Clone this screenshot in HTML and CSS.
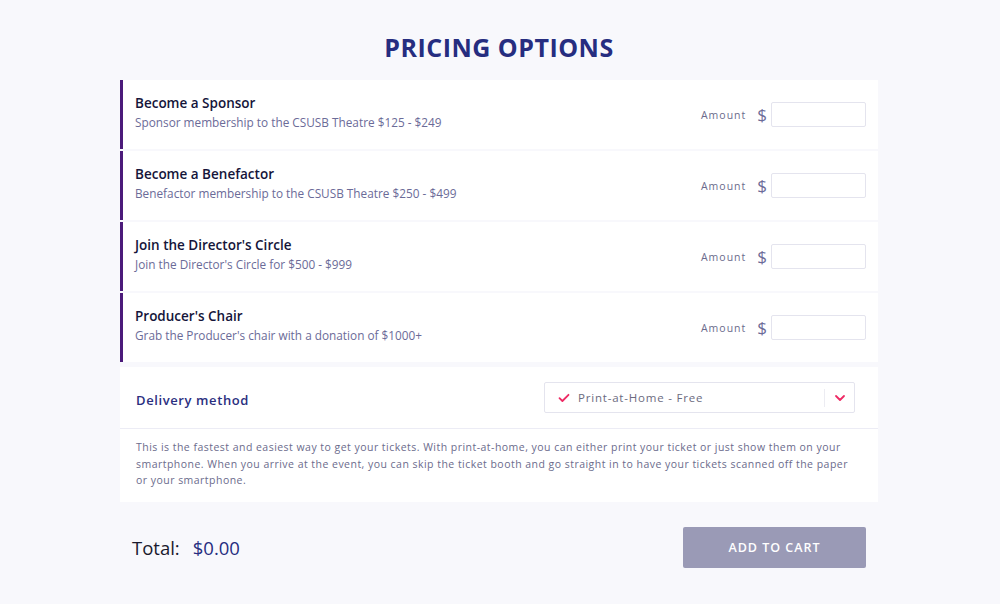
FILE: index.html
```html
<!DOCTYPE html>
<html lang="en">
<head>
<meta charset="utf-8">
<title>Pricing Options</title>
<link rel="stylesheet" href="styles.css">
</head>
<body>
<main class="wrap">
  <h1 class="title">PRICING OPTIONS</h1>

  <section class="options">
    <div class="option">
      <div class="option-text">
        <div class="option-name">Become a Sponsor</div>
        <div class="option-desc">Sponsor membership to the CSUSB Theatre $125 - $249</div>
      </div>
      <label class="amount"><span class="amount-label">Amount</span><span class="dollar">$</span><input class="amount-input" type="text"></label>
    </div>
    <div class="option">
      <div class="option-text">
        <div class="option-name">Become a Benefactor</div>
        <div class="option-desc">Benefactor membership to the CSUSB Theatre $250 - $499</div>
      </div>
      <label class="amount"><span class="amount-label">Amount</span><span class="dollar">$</span><input class="amount-input" type="text"></label>
    </div>
    <div class="option">
      <div class="option-text">
        <div class="option-name">Join the Director's Circle</div>
        <div class="option-desc">Join the Director's Circle for $500 - $999</div>
      </div>
      <label class="amount"><span class="amount-label">Amount</span><span class="dollar">$</span><input class="amount-input" type="text"></label>
    </div>
    <div class="option">
      <div class="option-text">
        <div class="option-name">Producer's Chair</div>
        <div class="option-desc">Grab the Producer's chair with a donation of $1000+</div>
      </div>
      <label class="amount"><span class="amount-label">Amount</span><span class="dollar">$</span><input class="amount-input" type="text"></label>
    </div>
  </section>

  <section class="delivery">
    <div class="delivery-head">
      <div class="delivery-title">Delivery method</div>
      <div class="select">
        <svg class="check" width="12" height="10" viewBox="0 0 12 10"><path d="M1.5 5.2 L4.4 8 L10.5 1.8" fill="none" stroke="#ee2a64" stroke-width="1.8" stroke-linecap="round" stroke-linejoin="round"/></svg>
        <span class="select-text">Print-at-Home - Free</span>
        <span class="select-sep"></span>
        <svg class="chev" width="12" height="8" viewBox="0 0 12 8"><path d="M2 2 L6 6 L10 2" fill="none" stroke="#ee2a64" stroke-width="1.8" stroke-linecap="round" stroke-linejoin="round"/></svg>
      </div>
    </div>
    <p class="delivery-desc">This is the fastest and easiest way to get your tickets. With print-at-home, you can either print your ticket or just show them on your smartphone. When you arrive at the event, you can skip the ticket booth and go straight in to have your tickets scanned off the paper or your smartphone.</p>
  </section>

  <footer class="total-row">
    <div class="total"><span class="total-label">Total:</span><span class="total-value">$0.00</span></div>
    <button class="cart-btn" type="button">ADD TO CART</button>
  </footer>
</main>
</body>
</html>
```

FILE: styles.css
```css
* { box-sizing: border-box; }
html, body { margin: 0; padding: 0; }
body {
  background: #f8f8fc;
  font-family: "Open Sans", "Liberation Sans", sans-serif;
  width: 1000px;
  height: 604px;
  overflow: hidden;
}
.wrap {
  width: 758px;
  margin-left: 120px;
  padding-top: 29px;
}
.title {
  margin: 0 0 15px 0;
  height: 36px;
  line-height: 36px;
  text-align: center;
  font-size: 25px;
  font-weight: 700;
  letter-spacing: 0.5px;
  color: #262d80;
}
.options {
  display: flex;
  flex-direction: column;
  gap: 2px;
}
.option {
  height: 69px;
  background: #ffffff;
  border-left: 3px solid #4b1a7a;
  display: flex;
  align-items: center;
  justify-content: space-between;
  padding: 0 12px 0 12px;
}
.option-text {
  display: flex;
  flex-direction: column;
  gap: 2px;
  margin-top: -6px;
}
.option-name {
  font-size: 13.5px;
  font-weight: 600;
  color: #15153a;
}
.option-desc {
  font-size: 11.8px;
  color: #6b6b98;
}
.amount {
  display: flex;
  align-items: center;
}
.amount-label {
  font-size: 10.5px;
  letter-spacing: 1px;
  color: #6b6b8c;
  margin-right: 11px;
}
.dollar {
  font-size: 17px;
  color: #6b6b98;
  margin-right: 4px;
}
.amount-input {
  width: 95px;
  height: 25px;
  border: 1px solid #e4e4ee;
  border-radius: 2px;
  background: #fff;
  outline: none;
  padding: 0 6px;
}
.delivery {
  margin-top: 5px;
  background: #ffffff;
}
.delivery-head {
  height: 62px;
  display: flex;
  align-items: center;
  justify-content: space-between;
  padding: 0 23px 0 16px;
  border-bottom: 1px solid #ececf5;
}
.delivery-title {
  font-size: 13px;
  font-weight: 600;
  letter-spacing: 0.6px;
  color: #2b2f7f;
  margin-top: 5px;
}
.select {
  width: 311px;
  height: 31px;
  border: 1px solid #e4e4ee;
  border-radius: 2px;
  display: flex;
  align-items: center;
  padding: 0 8px 0 13px;
}
.check { margin-right: 8px; }
.select-text {
  flex: 1;
  font-size: 11.5px;
  letter-spacing: 0.8px;
  color: #6b6b80;
}
.select-sep {
  width: 1px;
  height: 18px;
  background: #ececf2;
  margin-right: 9px;
}
.chev { margin-top: 1px; }
.delivery-desc {
  margin: 0;
  padding: 10px 22px 13px 16px;
  font-size: 10.5px;
  line-height: 16.5px;
  letter-spacing: 0.47px;
  color: #6b6b8c;
}
.total-row {
  margin-top: 25px;
  display: flex;
  align-items: center;
  justify-content: space-between;
  padding: 0 12px 0 12px;
}
.total {
  display: flex;
  align-items: baseline;
  font-size: 18.5px;
}
.total-label { color: #1a1a2e; margin-right: 13px; }
.total-value { color: #262d80; }
.cart-btn {
  width: 183px;
  height: 41px;
  border: none;
  border-radius: 2px;
  background: #9a9ab6;
  color: #ffffff;
  font-family: "Open Sans", "Liberation Sans", sans-serif;
  font-size: 12.5px;
  font-weight: 600;
  letter-spacing: 1px;
}
```
